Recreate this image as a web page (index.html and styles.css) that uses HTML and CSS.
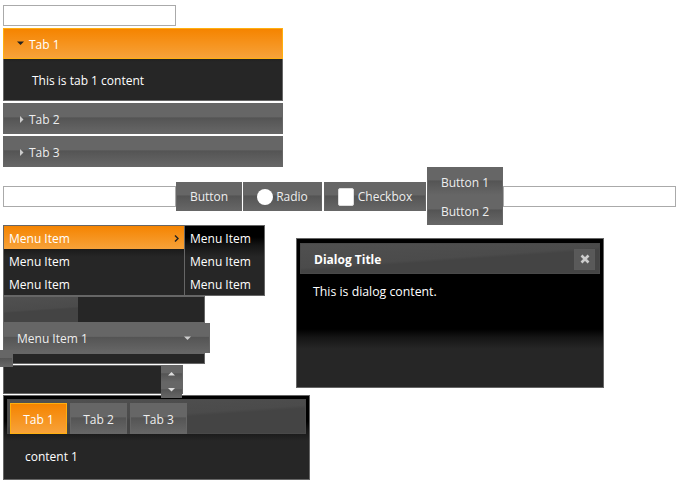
FILE: index.html
```html
<!DOCTYPE html>
<html lang="en">
<head>
    <meta charset="UTF-8">
    <title>Widgets</title>
    <link rel="stylesheet" href="styles.css">
</head>
<body>
    <input class="field" type="text">

    <div class="accordion">
        <div class="acc-header state-active">
            <svg class="icon" viewBox="0 0 16 16"><polygon points="4,5.5 11,5.5 7.5,9" fill="#222"/></svg>
            Tab 1
        </div>
        <div class="acc-panel content">This is tab 1 content</div>
        <div class="acc-header state-default">
            <svg class="icon" viewBox="0 0 16 16"><polygon points="7,5 10.5,8.5 7,12" fill="#ccc"/></svg>
            Tab 2
        </div>
        <div class="acc-header state-default">
            <svg class="icon" viewBox="0 0 16 16"><polygon points="7,5 10.5,8.5 7,12" fill="#ccc"/></svg>
            Tab 3
        </div>
    </div>

    <div class="row">
        <input class="field" type="text">
        <div class="group">
            <span class="btn btn-plain state-default">Button</span>
            <label class="btn btn-radio state-default"><span class="radio"></span>Radio</label>
            <label class="btn btn-check state-default"><span class="check"></span>Checkbox</label>
        </div>
        <div class="vgroup">
            <span class="btn state-default">Button 1</span>
            <span class="btn state-default">Button 2</span>
        </div>
        <input class="field" type="text">
    </div>

    <div class="menu-wrap">
        <ul class="menu content">
            <li class="menu-item active">Menu Item
                <svg class="caret" viewBox="0 0 5 7"><polyline points="1,0.5 4,3.5 1,6.5" fill="none" stroke="#222" stroke-width="1.4"/></svg>
            </li>
            <li class="menu-item">Menu Item</li>
            <li class="menu-item">Menu Item</li>
        </ul>
        <ul class="submenu content">
            <li class="menu-item">Menu Item</li>
            <li class="menu-item">Menu Item</li>
            <li class="menu-item">Menu Item</li>
        </ul>
    </div>

    <div class="progress content">
        <div class="progress-value header" style="width: 74px"></div>
    </div>

    <div class="selectmenu state-default">
        <span>Menu Item 1</span>
        <svg class="icon" viewBox="0 0 16 16"><polygon points="4,5.5 11,5.5 7.5,9" fill="#ccc"/></svg>
    </div>

    <div class="slider content">
        <span class="handle state-default"></span>
    </div>

    <div class="spinner content">
        <input class="spin-input" type="text">
        <div class="spin-btns">
            <span class="spin-btn state-default"><svg class="icon" viewBox="0 0 16 16"><polygon points="4,9.5 11,9.5 7.5,6" fill="#ddd"/></svg></span>
            <span class="spin-btn state-default"><svg class="icon" viewBox="0 0 16 16"><polygon points="4,6 11,6 7.5,9.5" fill="#ddd"/></svg></span>
        </div>
    </div>

    <div class="tabs content">
        <ul class="tab-nav header">
            <li class="tab state-active">Tab 1</li>
            <li class="tab state-default">Tab 2</li>
            <li class="tab state-default">Tab 3</li>
        </ul>
        <div class="tab-panel">content 1</div>
    </div>

    <div class="dialog content">
        <div class="titlebar header">
            <span>Dialog Title</span>
            <span class="close state-default">
                <svg viewBox="0 0 10 10" width="10" height="10"><path d="M1.5 1.5 L8.5 8.5 M8.5 1.5 L1.5 8.5" stroke="#ccc" stroke-width="2.6"/></svg>
            </span>
        </div>
        <div class="dialog-body">This is dialog content.</div>
    </div>
</body>
</html>
```

FILE: styles.css
```css
* {
    box-sizing: border-box;
}

body {
    margin: 0;
    padding: 5px 0 0 3px;
    font-family: "Open Sans", "Liberation Sans", sans-serif;
    font-size: 12px;
    color: #eee;
    background: #fff;
}

ul {
    list-style: none;
    margin: 0;
    padding: 0;
}

.field {
    display: block;
    width: 173px;
    height: 21px;
    margin: 0;
    padding: 0 2px;
    border: 1px solid #aaa;
    background: #fff;
    font: inherit;
}

/* theme pieces */
.content {
    border: 1px solid #666;
    background: #000 linear-gradient(#000 0, #000 42px, #141414 50px, #262626 62px, #262626 100px) 50% 100% / 100% 100px no-repeat;
    color: #fff;
}

.state-default {
    border: 1px solid #666;
    background: linear-gradient(#666 0, #666 44%, #545454 48%, #585858 58%, #666 100%);
    color: #eee;
}

.state-active {
    border: 1px solid #ffaf0f;
    background: linear-gradient(#f58400, #f7a23a);
    color: #fff;
}

.header {
    border: 1px solid #494949;
    background: linear-gradient(176deg, #505050 0, #4b4b4b 48%, #444 54%, #444 100%);
    color: #fff;
    font-weight: bold;
}

.icon {
    width: 16px;
    height: 16px;
    flex: none;
}

/* accordion */
.accordion {
    width: 280px;
    margin-top: 2px;
}

.acc-header {
    display: flex;
    align-items: center;
    height: 31px;
    margin-top: 2px;
    padding: 1px 0 0 9px;
}

.acc-header:first-child {
    margin-top: 0;
}

.acc-panel {
    height: 42px;
    border-top: 0;
    padding: 1px 0 0 28px;
    line-height: 41px;
}

/* button row */
.row {
    display: flex;
    align-items: center;
    height: 58px;
}

.group {
    display: flex;
    gap: 1px;
}

.btn {
    display: flex;
    align-items: center;
    justify-content: center;
    gap: 3px;
    height: 29px;
    padding: 1px 0 0;
}

.btn-plain {
    width: 66px;
}

.btn-radio {
    width: 79px;
}

.btn-check {
    width: 102px;
    margin-left: 1px;
    gap: 4px;
}

.radio {
    width: 16px;
    height: 16px;
    border-radius: 50%;
    background: #fff;
}

.check {
    width: 16px;
    height: 18px;
    border-radius: 2px;
    border: 1px solid #ddd;
    background: #fff;
}

.vgroup {
    display: flex;
    flex-direction: column;
    width: 76px;
    margin-left: 1px;
}

/* menu */
.menu-wrap {
    position: relative;
    height: 71px;
}

.menu {
    width: 182px;
    height: 71px;
}

.submenu {
    position: absolute;
    left: 181px;
    top: 0;
    width: 81px;
    height: 71px;
}

.menu-item {
    display: flex;
    align-items: center;
    justify-content: space-between;
    height: 23px;
    padding: 1px 5px 0;
    color: #fff;
}

.menu-item.active {
    background: linear-gradient(#f58400, #f7a23a);
}

.caret {
    width: 5px;
    height: 7px;
}

/* progress, select, slider, spinner */
.progress {
    width: 202px;
    height: 27px;
}

.progress-value {
    height: 100%;
    border: 0;
}

.selectmenu {
    display: flex;
    align-items: center;
    justify-content: space-between;
    width: 207px;
    height: 30px;
    padding: 1px 13px 0;
}

.slider {
    position: relative;
    width: 202px;
    height: 11px;
}

.handle {
    position: absolute;
    left: -7px;
    top: -4px;
    width: 16px;
    height: 17px;
}

.spinner {
    display: flex;
    width: 180px;
    height: 29px;
    margin-top: 1px;
}

.spin-input {
    flex: 1;
    min-width: 0;
    border: 0;
    background: transparent;
    color: #fff;
    font: inherit;
}

.spin-btns {
    display: flex;
    flex-direction: column;
    width: 21px;
}

.spin-btn {
    flex: 1;
    display: flex;
    align-items: center;
    justify-content: center;
    border: 0;
}

/* tabs */
.tabs {
    width: 307px;
    height: 85px;
    margin-top: 1px;
    padding: 3px;
}

.tab-nav {
    display: flex;
    gap: 3px;
    padding: 3px 2px 0;
}

.tab {
    display: flex;
    align-items: center;
    justify-content: center;
    width: 57px;
    height: 31px;
    margin-bottom: -1px;
    padding-top: 1px;
    font-weight: normal;
}

.tab-panel {
    padding: 14px 18px 12px;
}

/* dialog */
.dialog {
    position: absolute;
    left: 296px;
    top: 238px;
    width: 308px;
    height: 150px;
    padding: 4px 3px 3px;
}

.titlebar {
    display: flex;
    align-items: center;
    justify-content: space-between;
    height: 31px;
    padding: 1px 4px 0 13px;
}

.close {
    display: flex;
    align-items: center;
    justify-content: center;
    width: 21px;
    height: 21px;
    border-color: #5a5a5a;
    background: #595959;
}

.dialog-body {
    padding: 9px 13px 7px;
    font-size: 12.3px;
}
```
